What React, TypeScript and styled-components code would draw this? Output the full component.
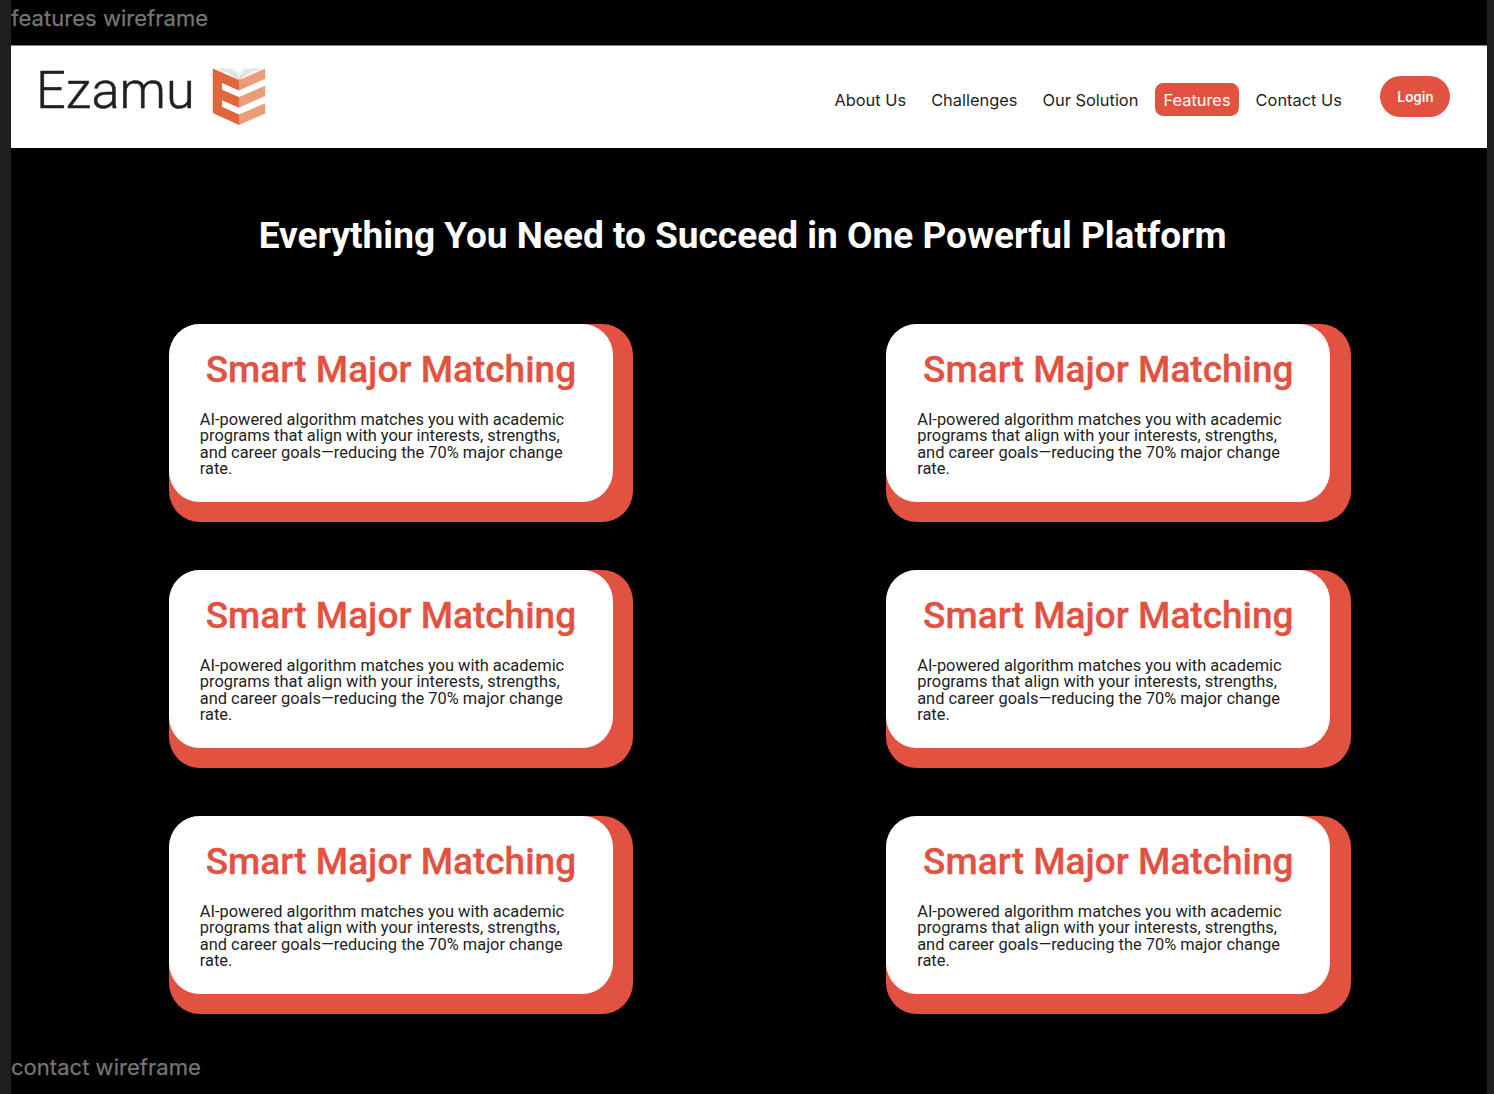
import React from "react";
import styled, { createGlobalStyle } from "styled-components";

const GlobalStyle = createGlobalStyle`
  * { box-sizing: border-box; }
  html, body { margin: 0; background: #000; overflow: hidden; }
`;

const Canvas = styled.div`
  width: 1494px;
  height: 1094px;
  padding: 0 6.6px 0 11px;
  overflow: hidden;
  background: linear-gradient(#000, #000) 11px 0 / 1476.4px 100% no-repeat #1e1e1e;
  display: flex;
  flex-direction: column;
`;

const FrameLabel = styled.div`
  flex: none;
  height: 45px;
  font: 400 22px/36px Inter, sans-serif;
  letter-spacing: 0.03px;
  color: #757575;
  -webkit-text-stroke: 0.25px #757575;
  white-space: nowrap;
`;

const Header = styled.header`
  flex: none;
  height: 103px;
  padding: 0 37px 0 25px;
  background: #fff;
  border-top: 1px solid #8a8287;
  display: flex;
  justify-content: space-between;
  align-items: flex-start;
`;

const Brand = styled.div`
  display: flex;
  align-items: flex-start;
  height: 100%;
  padding-top: 12px;
`;

const Wordmark = styled.span`
  width: 176px;
  font: 300 52.3px/64px Roboto, sans-serif;
  letter-spacing: 0.1px;
  color: #231f20;
  -webkit-text-stroke: 0.5px #231f20;
  white-space: nowrap;
`;

const Emblem = styled.svg`
  display: block;
  width: 54px;
  height: 58px;
  margin-top: 10px;
`;

const Nav = styled.nav`
  display: flex;
  align-items: flex-start;
  padding-top: 30px;
`;

const NavLink = styled.a<{ $active?: boolean }>`
  height: 33px;
  margin-top: 7.4px;
  padding: 0 8.2px;
  margin-right: 8.7px;
  border-radius: 8.2px;
  font: 400 16.4px/34px Inter, sans-serif;
  color: ${(p) => (p.$active ? "#fff" : "#1e1e1e")};
  background: ${(p) => (p.$active ? "#e25241" : "transparent")};
  white-space: nowrap;
`;

const LoginButton = styled.button`
  width: 70px;
  height: 41px;
  margin-left: 21.6px;
  padding: 0;
  border: 0;
  border-radius: 20.5px;
  background: #e25241;
  color: #fff;
  font: 500 14.37px/43px Roboto, sans-serif;
  letter-spacing: 0.1px;
`;

const Heading = styled.h1`
  flex: none;
  height: 176px;
  margin: 0;
  padding-top: 66px;
  padding-right: 13px;
  font: 700 37.03px/44px Roboto, sans-serif;
  color: #fff;
  text-align: center;
  white-space: nowrap;
`;

const CardGrid = styled.main`
  flex: none;
  height: 725px;
  padding-left: 158px;
  display: grid;
  grid-template-columns: 464.4px 464.4px;
  grid-auto-rows: 198px;
  column-gap: 253px;
  row-gap: 48px;
`;

const CardShadow = styled.article`
  padding: 0 20.5px 20.5px 0;
  border-radius: 31px;
  background: #e25241;
`;

const CardFace = styled.div`
  height: 177.5px;
  padding: 24px 30.8px 0;
  border-radius: 31px;
  background: #fff;
`;

const CardTitle = styled.h2`
  margin: 0 0 19.7px;
  font: 500 37px/44px Roboto, sans-serif;
  color: #e25241;
  -webkit-text-stroke: 0.3px #e25241;
  text-align: center;
  white-space: nowrap;
`;

const CardText = styled.p`
  margin: 0;
  font: 400 16.42px/16.42px Roboto, sans-serif;
  color: #1e1e1e;
  white-space: nowrap;
`;

const links = ["About Us", "Challenges", "Our Solution", "Features", "Contact Us"];

const description = [
  "AI-powered algorithm matches you with academic",
  "programs that align with your interests, strengths,",
  "and career goals—reducing the 70% major change",
  "rate.",
];

const cards = Array.from({ length: 6 }, () => ({ title: "Smart Major Matching", lines: description }));

function BookEmblem() {
  return (
    <Emblem viewBox="0 0 54 58" aria-hidden="true">
      <path d="M5 .3H22L27 6 32 .3H49L27 11.5Z" fill="#f4f4f4" />
      <g fill="none" stroke="#cbcdcf" strokeWidth=".55">
        <path d="M5 .8Q18 3 27 12M9 .4Q20 3 27 12M13 .4Q22 4 27 12M17 .4Q23 4 27 12M21 .4Q25 5 27 12" />
        <path d="M49 .8Q36 3 27 12M45 .4Q34 3 27 12M41 .4Q32 4 27 12M37 .4Q31 4 27 12M33 .4Q29 5 27 12" />
      </g>
      <path
        d="M.8 .6 27 12V22.4L10 15V21.8L27 29V39.7L10 32.2V38.8L27 46.4V57L.8 45Z"
        fill="#e0663b"
      />
      <path
        d="M27 12 53.2 .6V10.8L27 22.4ZM27 29 53.2 17.7V28L27 39.7ZM27 46.4 53.2 35.2V45.5L27 57Z"
        fill="#eb9d79"
      />
    </Emblem>
  );
}

export default function App() {
  return (
    <>
      <GlobalStyle />
      <Canvas>
        <FrameLabel>features wireframe</FrameLabel>
        <Header>
          <Brand>
            <Wordmark>Ezamu</Wordmark>
            <BookEmblem />
          </Brand>
          <Nav>
            {links.map((label) => (
              <NavLink key={label} $active={label === "Features"}>{label}</NavLink>
            ))}
            <LoginButton>Login</LoginButton>
          </Nav>
        </Header>
        <Heading>Everything You Need to Succeed in One Powerful Platform</Heading>
        <CardGrid>
          {cards.map((card, index) => (
            <CardShadow key={index}>
              <CardFace>
                <CardTitle>{card.title}</CardTitle>
                <CardText>
                  {card.lines.map((line) => (
                    <React.Fragment key={line}>{line}<br /></React.Fragment>
                  ))}
                </CardText>
              </CardFace>
            </CardShadow>
          ))}
        </CardGrid>
        <FrameLabel>contact wireframe</FrameLabel>
      </Canvas>
    </>
  );
}
